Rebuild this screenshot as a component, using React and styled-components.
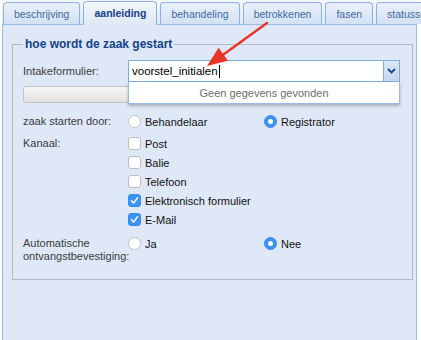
import React from "react"
import styled, { createGlobalStyle } from "styled-components"

const GlobalStyle = createGlobalStyle`
    body {
        margin: 0;
        background: #fff;
        font-family: "Liberation Sans", Arial, sans-serif;
    }
`

const Screen = styled.div`
    position: relative;
    width: 421px;
    height: 340px;
    overflow: hidden;
`

const TabPanel = styled.div`
    margin-left: 2px;
    width: 415px;
    height: 340px;
    display: flex;
    flex-direction: column;
`

const TabStrip = styled.div`
    display: flex;
    align-items: flex-end;
    gap: 3px;
    height: 25px;
    box-sizing: border-box;
    padding-left: 1px;
    background: linear-gradient(#f4f7fc, #dfe8f6);
    border-bottom: 1px solid #99bbe8;
`

const Tab = styled.div`
    height: ${p => (p.$active ? "24px" : "22px")};
    margin-bottom: ${p => (p.$active ? "-1px" : "0")};
    box-sizing: border-box;
    padding: 0 10px;
    display: flex;
    align-items: center;
    white-space: nowrap;
    font-size: 10.5px;
    font-weight: ${p => (p.$active ? 700 : 400)};
    color: ${p => (p.$active ? "#15428b" : "#416aa3")};
    border: 1px solid #8db2e3;
    border-bottom: ${p => (p.$active ? "1px solid #dfe8f6" : "none")};
    border-radius: 4px 4px 0 0;
    background: ${p =>
        p.$active
            ? "linear-gradient(#f3f7fd, #dfe8f6)"
            : "linear-gradient(#e9f0fa, #d3e1f4)"};
`

const Body = styled.div`
    flex: 1;
    background: #dfe8f6;
    border-left: 1px solid #99bbe8;
    border-right: 1px solid #99bbe8;
    padding: 0 3px 0 9px;
`

const FieldSet = styled.fieldset`
    margin: 12px 0 0;
    padding: 9px 10px 16px;
    border: 1px solid #b5b8c8;
    min-inline-size: 0;
`

const Legend = styled.legend`
    padding: 0 2px;
    font-size: 12px;
    line-height: 14px;
    font-weight: 700;
    color: #15428b;
`

const Row = styled.div`
    display: grid;
    grid-template-columns: 105px 1fr;
    align-items: ${p => (p.$top ? "start" : "center")};
    margin-top: ${p => p.$gap || 0}px;
`

const Label = styled.div`
    font-size: 11px;
    line-height: ${p => p.$line || 13}px;
    color: #3c3c3c;
    white-space: nowrap;
`

const Combo = styled.div`
    position: relative;
    display: flex;
    width: 272px;
    height: 22px;
`

const ComboInput = styled.div`
    flex: 1;
    display: flex;
    align-items: center;
    padding-left: 3px;
    background: #fff;
    border: 1px solid #7eadd9;
    border-right: none;
    font-size: 11.5px;
    color: #000;
`

const Caret = styled.span`
    width: 1px;
    height: 13px;
    margin-left: 1px;
    background: #000;
`

const Trigger = styled.div`
    width: 17px;
    box-sizing: border-box;
    display: flex;
    align-items: center;
    justify-content: center;
    border: 1px solid #7eadd9;
    background: linear-gradient(#dde8f7, #c4d7ef);
`

const DropList = styled.div`
    position: absolute;
    left: 0;
    top: 100%;
    width: 272px;
    height: 22px;
    box-sizing: border-box;
    display: flex;
    align-items: center;
    justify-content: center;
    background: #fff;
    border: 1px solid #99bbe8;
    border-top: none;
    box-shadow: 0 2px 3px rgba(0, 0, 0, 0.25);
    font-size: 11px;
    color: #6d6d6d;
    z-index: 2;
`

const Bar = styled.div`
    margin: 4px 2px 0 0;
    height: 17px;
    box-sizing: border-box;
    border: 1px solid #c4c4c4;
    border-radius: 3px;
    background: linear-gradient(#f7f7f7, #e2e2e2);
`

const Options = styled.div`
    display: grid;
    grid-template-columns: 136px 136px;
`

const Stack = styled.div`
    display: flex;
    flex-direction: column;
`

const Option = styled.label`
    display: flex;
    align-items: center;
    gap: 4px;
    height: ${p => (p.$short ? "13px" : "19px")};
    font-size: 11px;
    color: #111;
    white-space: nowrap;
`

const RadioDot = styled.span`
    width: 13px;
    height: 13px;
    box-sizing: border-box;
    border-radius: 50%;
    display: flex;
    align-items: center;
    justify-content: center;
    background: ${p => (p.$checked ? "#3b93f6" : "#fff")};
    border: 1px solid ${p => (p.$checked ? "#3a8bef" : "#c2c2c2")};

    &::after {
        content: "";
        display: ${p => (p.$checked ? "block" : "none")};
        width: 5px;
        height: 5px;
        border-radius: 50%;
        background: #fff;
    }
`

const CheckBox = styled.span`
    width: 13px;
    height: 13px;
    box-sizing: border-box;
    border-radius: 3px;
    display: flex;
    align-items: center;
    justify-content: center;
    background: ${p => (p.$checked ? "#3b93f6" : "#fff")};
    border: 1px solid ${p => (p.$checked ? "#3a8bef" : "#bdbdbd")};
`

const ArrowLayer = styled.svg`
    position: absolute;
    left: 0;
    top: 0;
    pointer-events: none;
`

const tabs = ["beschrijving", "aanleiding", "behandeling", "betrokkenen", "fasen", "statussen"]

const kanalen = [
    { label: "Post", checked: false },
    { label: "Balie", checked: false },
    { label: "Telefoon", checked: false },
    { label: "Elektronisch formulier", checked: true },
    { label: "E-Mail", checked: true },
]

const Radio = ({ checked, short, children }) => (
    <Option $short={short}>
        <RadioDot $checked={checked} />
        {children}
    </Option>
)

const Check = ({ checked, children }) => (
    <Option>
        <CheckBox $checked={checked}>
            {checked && (
                <svg width="9" height="9" viewBox="0 0 9 9">
                    <path d="M1.5 4.8 L3.6 7 L7.6 1.8" fill="none" stroke="#fff" strokeWidth="1.5" strokeLinecap="round" strokeLinejoin="round" />
                </svg>
            )}
        </CheckBox>
        {children}
    </Option>
)

const App = () => {
    return (
        <Screen>
            <GlobalStyle />
            <TabPanel>
                <TabStrip>
                    {tabs.map(t => (
                        <Tab key={t} $active={t === "aanleiding"}>
                            {t}
                        </Tab>
                    ))}
                </TabStrip>
                <Body>
                    <FieldSet>
                        <Legend>hoe wordt de zaak gestart</Legend>

                        <Row>
                            <Label>Intakeformulier:</Label>
                            <Combo>
                                <ComboInput>
                                    voorstel_initialen
                                    <Caret />
                                </ComboInput>
                                <Trigger>
                                    <svg width="9" height="6" viewBox="0 0 9 6">
                                        <path d="M1 1 L4.5 4.5 L8 1" fill="none" stroke="#15428b" strokeWidth="1.8" />
                                    </svg>
                                </Trigger>
                                <DropList>Geen gegevens gevonden</DropList>
                            </Combo>
                        </Row>
                        <Bar />

                        <Row $gap={9}>
                            <Label>zaak starten door:</Label>
                            <Options>
                                <Radio>Behandelaar</Radio>
                                <Radio checked>Registrator</Radio>
                            </Options>
                        </Row>

                        <Row $gap={3} $top>
                            <Label $line={19}>Kanaal:</Label>
                            <Stack>
                                {kanalen.map(k => (
                                    <Check key={k.label} checked={k.checked}>
                                        {k.label}
                                    </Check>
                                ))}
                            </Stack>
                        </Row>

                        <Row $gap={8} $top>
                            <Label>
                                Automatische
                                <br />
                                ontvangstbevestiging:
                            </Label>
                            <Options>
                                <Radio short>Ja</Radio>
                                <Radio short checked>
                                    Nee
                                </Radio>
                            </Options>
                        </Row>
                    </FieldSet>
                </Body>
            </TabPanel>

            <ArrowLayer width="421" height="340">
                <line x1="267" y1="23" x2="220" y2="57" stroke="#e8352a" strokeWidth="2.5" strokeLinecap="round" />
                <polygon points="207,66 218.6,47.8 228,60.8" fill="#e8352a" />
            </ArrowLayer>
        </Screen>
    )
}

export default App
